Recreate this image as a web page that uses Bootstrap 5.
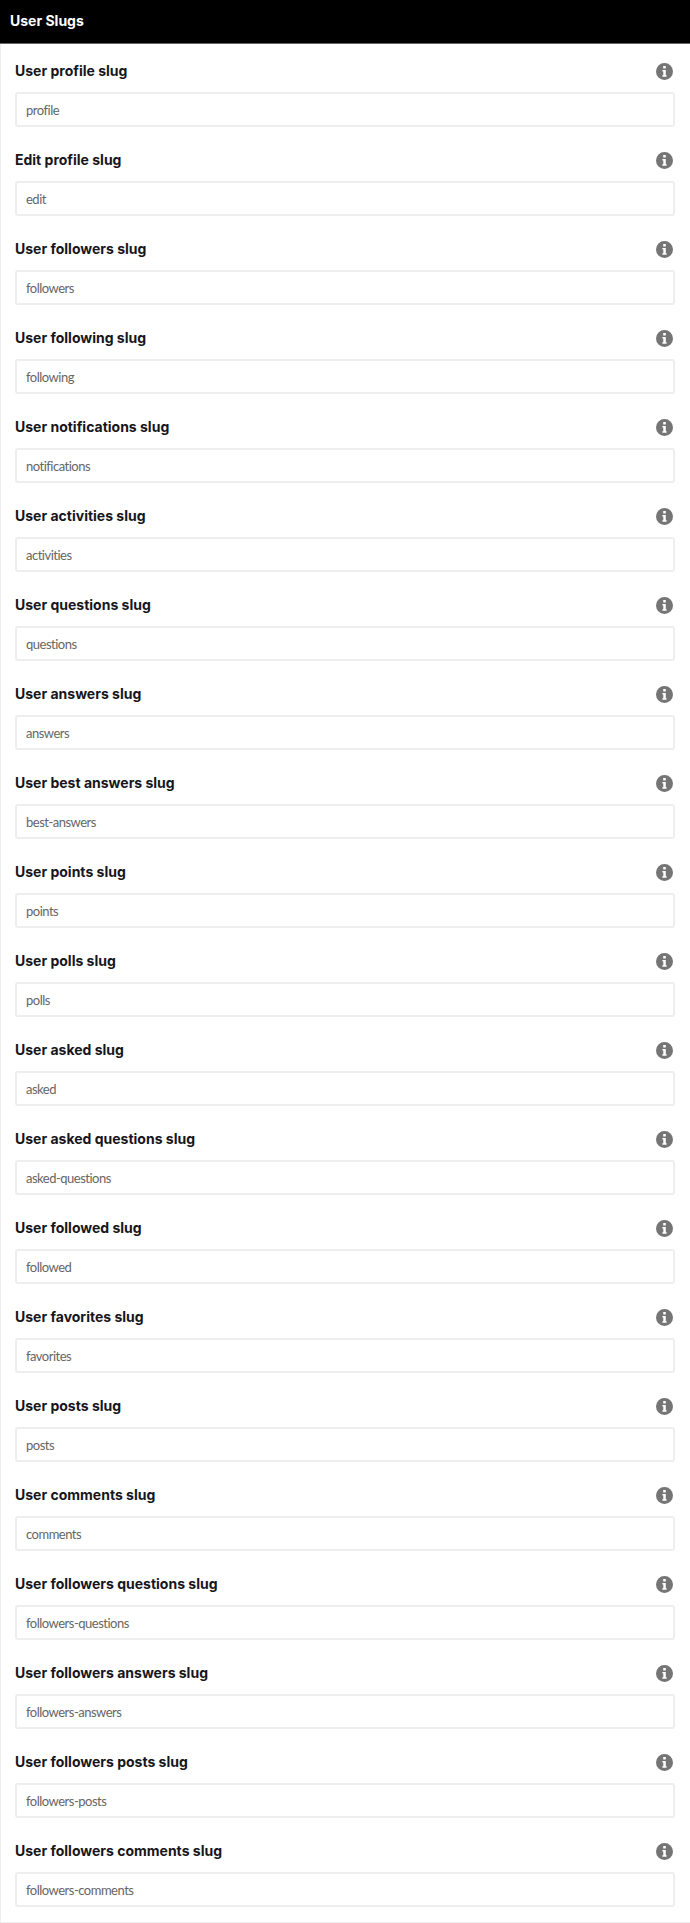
<!DOCTYPE html>
<html lang="en">
<head>
  <meta charset="UTF-8">
  <title>User Slugs</title>
  <link href="https://cdn.jsdelivr.net/npm/bootstrap@5.3.3/dist/css/bootstrap.min.css" rel="stylesheet">
  <style>
    body { background: #fff; font-family: Inter, "Liberation Sans", sans-serif; }
    .panel-head { height: 44px; background: #000; border-bottom: 1px solid #666; padding: 0 10px; }
    .panel-head h1 { font-size: 14px; font-weight: 700; color: #fff; margin: 0; }
    .panel-body { padding: 9px 15px 0 14px; border-left: 1px solid #eee; border-bottom: 1px solid #eee; }
    .slug-field { height: 89px; }
    .slug-head { height: 37px; margin-bottom: 2px; padding-right: 2px; }
    .slug-head label { font-size: 14px; font-weight: 700; color: #16161c; margin: 0 0 2px; }
    .slug-input.form-control { height: 35px; padding: 1px 9px 0; font-family: Lato, sans-serif; font-size: 13px; letter-spacing: -.5px; color: #666; border: 2px solid #eee; border-radius: 3px; }
    .info-icon { width: 17px; height: 17px; fill: #757575; display: block; }
  </style>
</head>
<body>
<div class="panel-head d-flex align-items-center"><h1>User Slugs</h1></div>
<div class="panel-body" id="slugList"></div>

<script src="https://cdn.jsdelivr.net/npm/bootstrap@5.3.3/dist/js/bootstrap.bundle.min.js"></script>
<script>
  const SLUGS = [
    ['User profile slug', 'profile'],
    ['Edit profile slug', 'edit'],
    ['User followers slug', 'followers'],
    ['User following slug', 'following'],
    ['User notifications slug', 'notifications'],
    ['User activities slug', 'activities'],
    ['User questions slug', 'questions'],
    ['User answers slug', 'answers'],
    ['User best answers slug', 'best-answers'],
    ['User points slug', 'points'],
    ['User polls slug', 'polls'],
    ['User asked slug', 'asked'],
    ['User asked questions slug', 'asked-questions'],
    ['User followed slug', 'followed'],
    ['User favorites slug', 'favorites'],
    ['User posts slug', 'posts'],
    ['User comments slug', 'comments'],
    ['User followers questions slug', 'followers-questions'],
    ['User followers answers slug', 'followers-answers'],
    ['User followers posts slug', 'followers-posts'],
    ['User followers comments slug', 'followers-comments']
  ];

  const icon = `<svg class="info-icon" viewBox="0 0 17 17"><path fill-rule="evenodd" d="M8.5 0a8.5 8.5 0 1 1 0 17a8.5 8.5 0 0 1 0-17zM7.2 2.9v2.6h2.6V2.9zM6.4 7v1.5h.9v3.7h-.9v1.6h4.2v-1.6h-.8V7z"/></svg>`;

  document.getElementById('slugList').innerHTML = SLUGS.map(s => `
    <div class="slug-field">
      <div class="slug-head d-flex justify-content-between align-items-center">
        <label>${s[0]}</label>${icon}
      </div>
      <input type="text" class="form-control slug-input" value="${s[1]}">
    </div>`).join('');
</script>
</body>
</html>
